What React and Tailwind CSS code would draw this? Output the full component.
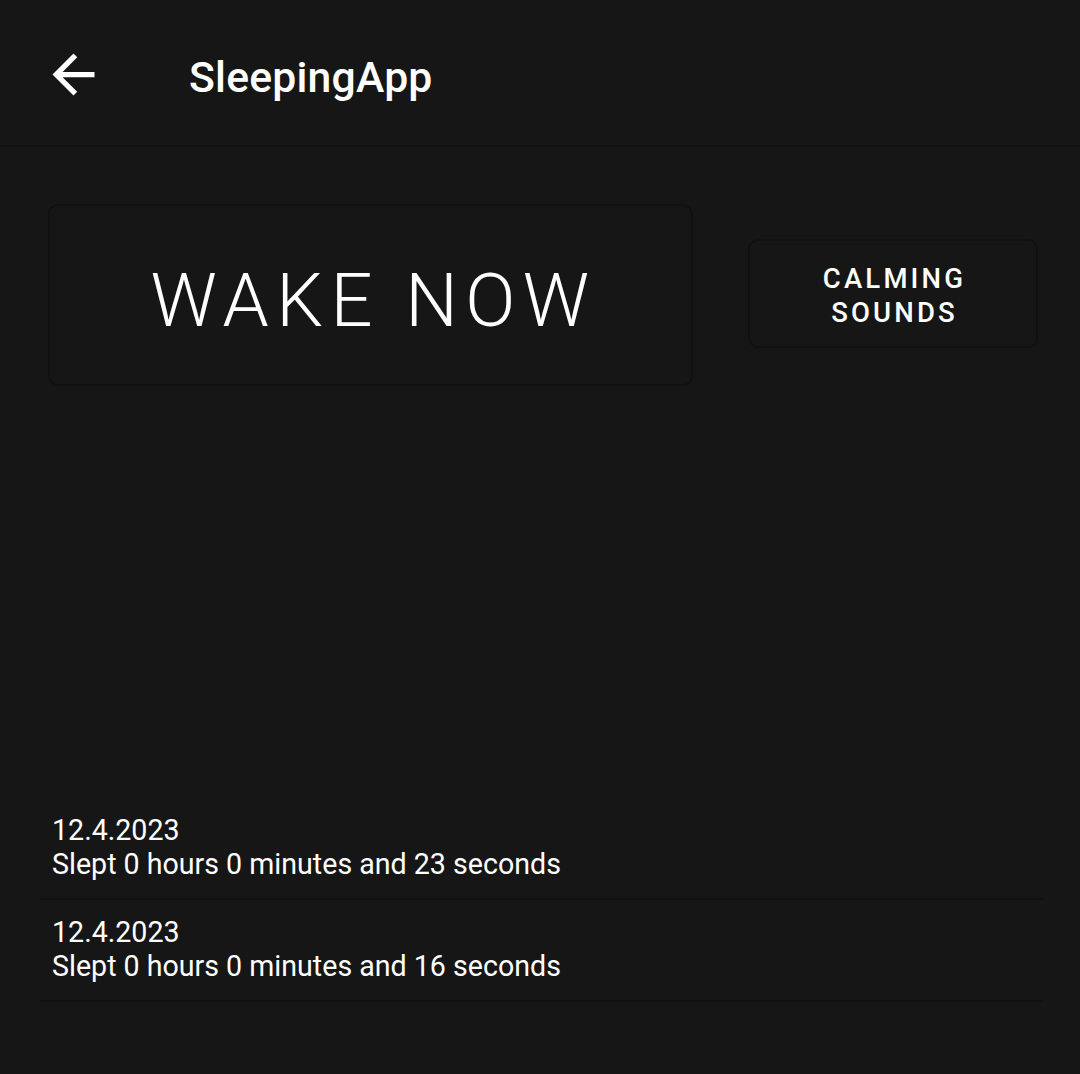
import { useState } from 'react';

const sessions = [
    { date: '12.4.2023', seconds: 23 },
    { date: '12.4.2023', seconds: 16 },
];

const BackArrow = () => (
    <svg width="63" height="63" viewBox="0 0 24 24" fill="#ffffff">
        <path d="M20 11H7.83l5.59-5.59L12 4l-8 8 8 8 1.41-1.41L7.83 13H20v-2z" />
    </svg>
);

const App = () => {
    const [awake, setAwake] = useState(false);

    return (
        <div className="min-h-screen w-full bg-[#161616] text-white flex flex-col" style={{ fontFamily: 'Roboto, "Noto Sans", sans-serif' }}>
            {/* Toolbar */}
            <header className="h-[147px] flex items-center border-b-2 border-[#121212] shrink-0">
                <button className="ml-[42px] mt-[4px] w-[63px] h-[63px] flex items-center justify-center">
                    <BackArrow />
                </button>
                <h1 className="ml-[84px] mt-[10px] text-[42.7px] font-medium leading-none tracking-[0.005em]">SleepingApp</h1>
            </header>

            <main className="flex-1 flex flex-col">
                <div className="mt-[57px] flex items-center">
                    <button
                        onClick={() => setAwake(!awake)}
                        className="ml-[48px] w-[645px] h-[182px] rounded-[10px] border-2 border-[#111111] flex items-center justify-center"
                    >
                        <span className="text-[74px] font-light leading-none tracking-[0.1em] pl-[6px] pt-[12px]">WAKE NOW</span>
                    </button>
                    <button className="ml-[55px] w-[290px] h-[109px] rounded-[10px] border-2 border-[#111111] flex items-center justify-center -mt-[4px]">
                        <span className="text-[27.5px] font-medium leading-[34px] tracking-[0.115em] text-center pt-[5px] pl-[3px]">
                            CALMING
                            <br />
                            SOUNDS
                        </span>
                    </button>
                </div>

                <ul className="mt-[412px] ml-[40px] w-[1003px]">
                    {sessions.map((s, i) => (
                        <li key={i} className="pt-[15px] pb-[17px] pl-[12px] border-b-2 border-[#111111] text-[28.6px] leading-[34px]">
                            <div>{s.date}</div>
                            <div>Slept 0 hours 0 minutes and {s.seconds} seconds</div>
                        </li>
                    ))}
                </ul>
            </main>
        </div>
    );
};

export default App;
